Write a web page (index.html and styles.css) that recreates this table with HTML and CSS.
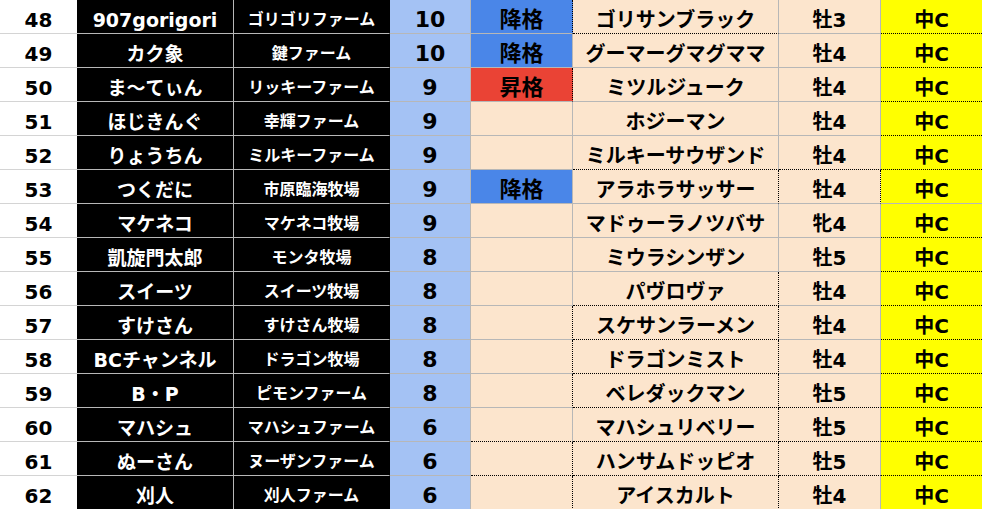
FILE: index.html
```html
<!DOCTYPE html>
<html lang="ja">
<head>
<meta charset="utf-8">
<link rel="stylesheet" href="styles.css">
</head>
<body>
<div class="sheet">
  <div class="row">
    <div class="c num">48</div><div class="c name">907gorigori</div><div class="c farm">ゴリゴリファーム</div><div class="c pt">10</div><div class="c mv down dr">降格</div><div class="c horse db">ゴリサンブラック</div><div class="c sex">牡3</div><div class="c cls db">中C</div>
  </div>
  <div class="row">
    <div class="c num">49</div><div class="c name">カク象</div><div class="c farm">鍵ファーム</div><div class="c pt">10</div><div class="c mv down">降格</div><div class="c horse">グーマーグマグママ</div><div class="c sex">牡4</div><div class="c cls db">中C</div>
  </div>
  <div class="row">
    <div class="c num">50</div><div class="c name">ま〜てぃん</div><div class="c farm">リッキーファーム</div><div class="c pt">9</div><div class="c mv up dr">昇格</div><div class="c horse">ミツルジューク</div><div class="c sex">牡4</div><div class="c cls db">中C</div>
  </div>
  <div class="row">
    <div class="c num">51</div><div class="c name">ほじきんぐ</div><div class="c farm">幸輝ファーム</div><div class="c pt">9</div><div class="c mv"></div><div class="c horse">ホジーマン</div><div class="c sex">牡4</div><div class="c cls db">中C</div>
  </div>
  <div class="row">
    <div class="c num">52</div><div class="c name">りょうちん</div><div class="c farm">ミルキーファーム</div><div class="c pt">9</div><div class="c mv"></div><div class="c horse db">ミルキーサウザンド</div><div class="c sex db">牡4</div><div class="c cls db">中C</div>
  </div>
  <div class="row">
    <div class="c num">53</div><div class="c name">つくだに</div><div class="c farm">市原臨海牧場</div><div class="c pt">9</div><div class="c mv down">降格</div><div class="c horse dr">アラホラサッサー</div><div class="c sex dr">牡4</div><div class="c cls">中C</div>
  </div>
  <div class="row">
    <div class="c num">54</div><div class="c name">マケネコ</div><div class="c farm">マケネコ牧場</div><div class="c pt">9</div><div class="c mv"></div><div class="c horse">マドゥーラノツバサ</div><div class="c sex">牝4</div><div class="c cls db">中C</div>
  </div>
  <div class="row">
    <div class="c num">55</div><div class="c name">凱旋門太郎</div><div class="c farm">モンタ牧場</div><div class="c pt">8</div><div class="c mv"></div><div class="c horse">ミウラシンザン</div><div class="c sex">牡5</div><div class="c cls db">中C</div>
  </div>
  <div class="row">
    <div class="c num">56</div><div class="c name">スイーツ</div><div class="c farm">スイーツ牧場</div><div class="c pt">8</div><div class="c mv"></div><div class="c horse db dr">パヴロヴァ</div><div class="c sex">牡4</div><div class="c cls db">中C</div>
  </div>
  <div class="row">
    <div class="c num">57</div><div class="c name">すけさん</div><div class="c farm">すけさん牧場</div><div class="c pt">8</div><div class="c mv dr"></div><div class="c horse db dr">スケサンラーメン</div><div class="c sex">牡4</div><div class="c cls db">中C</div>
  </div>
  <div class="row">
    <div class="c num">58</div><div class="c name">BCチャンネル</div><div class="c farm">ドラゴン牧場</div><div class="c pt">8</div><div class="c mv dr"></div><div class="c horse db dr">ドラゴンミスト</div><div class="c sex">牡4</div><div class="c cls db">中C</div>
  </div>
  <div class="row">
    <div class="c num">59</div><div class="c name">B・P</div><div class="c farm">ピモンファーム</div><div class="c pt">8</div><div class="c mv dr"></div><div class="c horse db dr">ベレダックマン</div><div class="c sex db">牡5</div><div class="c cls db">中C</div>
  </div>
  <div class="row">
    <div class="c num">60</div><div class="c name">マハシュ</div><div class="c farm">マハシュファーム</div><div class="c pt">6</div><div class="c mv db"></div><div class="c horse db dr">マハシュリベリー</div><div class="c sex db">牡5</div><div class="c cls db">中C</div>
  </div>
  <div class="row">
    <div class="c num">61</div><div class="c name">ぬーさん</div><div class="c farm">ヌーザンファーム</div><div class="c pt">6</div><div class="c mv db dr"></div><div class="c horse db dr">ハンサムドッピオ</div><div class="c sex db">牡5</div><div class="c cls db">中C</div>
  </div>
  <div class="row">
    <div class="c num">62</div><div class="c name">刈人</div><div class="c farm">刈人ファーム</div><div class="c pt">6</div><div class="c mv db dr"></div><div class="c horse db dr">アイスカルト</div><div class="c sex db">牡4</div><div class="c cls db">中C</div>
  </div>
</div>
</body>
</html>
```

FILE: styles.css
```css
html, body {
  margin: 0;
  padding: 0;
  background: #ffffff;
  overflow: hidden;
}

.sheet {
  width: 982px;
  font-family: "DejaVu Sans", "Noto Sans CJK JP", sans-serif;
  font-weight: bold;
  color: #000;
}

.row {
  display: grid;
  grid-template-columns: 77px 157px 156px 81px 102px 206px 102px 101px;
  height: 34px;
}

.c {
  box-sizing: border-box;
  height: 34px;
  border-right: 1px solid #b7b7b7;
  border-bottom: 1px solid #b7b7b7;
  display: flex;
  align-items: center;
  justify-content: center;
  padding-top: 7px;
  white-space: nowrap;
  line-height: 1;
  overflow: hidden;
}

.num {
  background: #fff;
  border-right: none;
  border-bottom-color: #d4d4d4;
  font-size: 20px;
}

.name {
  background: #000;
  color: #fff;
  font-size: 19px;
}

.farm {
  background: #000;
  color: #fff;
  font-size: 16px;
  border-right-color: #000;
}

.pt {
  background: #a4c2f4;
  font-size: 22px;
}

.mv {
  background: #fce5cd;
  font-size: 22px;
}

.mv.down { background: #4a86e8; }
.mv.up { background: #ea4335; }

.horse {
  background: #fce5cd;
  font-size: 20px;
}

.sex {
  background: #fce5cd;
  font-size: 20px;
}

.cls {
  background: #ffff00;
  font-size: 20px;
  border-right: none;
}

.db { border-bottom: 1px dotted #000; }
.dr { border-right: 1px dotted #000; }
```
